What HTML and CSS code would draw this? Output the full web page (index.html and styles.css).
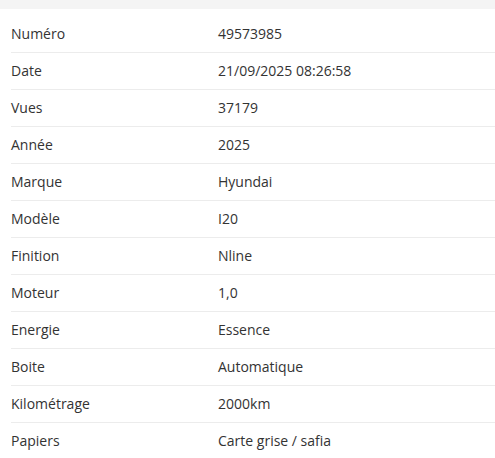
FILE: index.html
```html
<!DOCTYPE html>
<html lang="fr">
<head>
<meta charset="utf-8">
<link rel="stylesheet" href="styles.css">
</head>
<body>
<div class="topbar"></div>
<div class="specs">
  <div class="row"><span class="label">Numéro</span><span class="value">49573985</span></div>
  <div class="row"><span class="label">Date</span><span class="value">21/09/2025 08:26:58</span></div>
  <div class="row"><span class="label">Vues</span><span class="value">37179</span></div>
  <div class="row"><span class="label">Année</span><span class="value">2025</span></div>
  <div class="row"><span class="label">Marque</span><span class="value">Hyundai</span></div>
  <div class="row"><span class="label">Modèle</span><span class="value">I20</span></div>
  <div class="row"><span class="label">Finition</span><span class="value">Nline</span></div>
  <div class="row"><span class="label">Moteur</span><span class="value">1,0</span></div>
  <div class="row"><span class="label">Energie</span><span class="value">Essence</span></div>
  <div class="row"><span class="label">Boite</span><span class="value">Automatique</span></div>
  <div class="row"><span class="label">Kilométrage</span><span class="value">2000km</span></div>
  <div class="row"><span class="label">Papiers</span><span class="value">Carte grise / safia</span></div>
</div>
</body>
</html>
```
FILE: styles.css
```css
html, body {
  margin: 0;
  padding: 0;
  background: #fff;
}
body {
  font-family: "Open Sans", sans-serif;
  font-size: 14px;
  color: #333;
}
.topbar {
  height: 9px;
  background: #f4f4f4;
}
.specs {
  margin: 7px 0 0 11px;
}
.row {
  box-sizing: border-box;
  display: grid;
  grid-template-columns: 207px 1fr;
  height: 37px;
  padding-bottom: 2px;
  align-items: center;
  border-bottom: 1px solid #ececec;
}
.row:last-child {
  border-bottom: none;
}
```
